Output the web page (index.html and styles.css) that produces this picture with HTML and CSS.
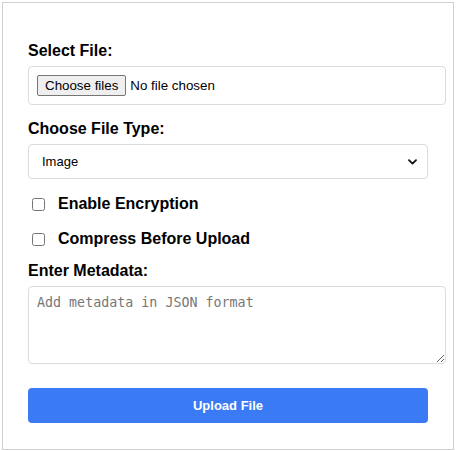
FILE: index.html
```html
<!DOCTYPE html>
<html lang="en">
<head>
<meta charset="utf-8">
<title>Upload</title>
<link rel="stylesheet" href="styles.css">
</head>
<body>
<form class="card">
  <div class="group">
    <label class="label">Select File:</label>
    <div class="file-box">
      <span class="file-btn">Choose files</span>
      <span class="file-name">No file chosen</span>
    </div>
  </div>
  <div class="group">
    <label class="label">Choose File Type:</label>
    <div class="select-wrap">
      <select class="select">
        <option>Image</option>
        <option>Document</option>
        <option>Video</option>
      </select>
      <svg class="chevron" width="9" height="6" viewBox="0 0 9 6"><path d="M1 1.2 L4.5 4.6 L8 1.2" fill="none" stroke="#111" stroke-width="1.8" stroke-linecap="round" stroke-linejoin="round"/></svg>
    </div>
  </div>
  <label class="check-row"><input type="checkbox" class="check"><span class="check-text">Enable Encryption</span></label>
  <label class="check-row"><input type="checkbox" class="check"><span class="check-text">Compress Before Upload</span></label>
  <div class="group group-meta">
    <label class="label">Enter Metadata:</label>
    <textarea class="textarea" placeholder="Add metadata in JSON format"></textarea>
  </div>
  <button type="button" class="upload">Upload File</button>
</form>
</body>
</html>
```

FILE: styles.css
```css
html, body {
  margin: 0;
  padding: 0;
  background: #fff;
}
body {
  font-family: "Liberation Sans", Arial, sans-serif;
  color: #000;
}
.card {
  box-sizing: border-box;
  width: 452px;
  height: 448px;
  margin: 2px auto 0;
  border: 1px solid #cfcfcf;
  padding: 39px 25px 25px;
  display: flex;
  flex-direction: column;
}
.group {
  display: flex;
  flex-direction: column;
  margin-bottom: 15px;
}
.label {
  font-size: 16px;
  font-weight: bold;
  line-height: 18px;
  margin-bottom: 6px;
}
.file-box {
  width: 418px;
  box-sizing: border-box;
  height: 39px;
  border: 1px solid #dcdcdc;
  border-radius: 4px;
  padding: 8px;
  display: flex;
  align-items: center;
  font-size: 13.33px;
}
.file-btn {
  box-sizing: border-box;
  height: 21px;
  display: flex;
  align-items: center;
  padding: 0 7px;
  background: #efefef;
  border: 1px solid #767676;
  border-radius: 2px;
  color: #000;
  font-size: 13.33px;
}
.file-name {
  margin-left: 4px;
  font-size: 13.33px;
}
.select-wrap {
  position: relative;
  width: 400px;
}
.select {
  -webkit-appearance: none;
  appearance: none;
  box-sizing: border-box;
  width: 400px;
  height: 35px;
  margin: 0;
  border: 1px solid #dcdcdc;
  border-radius: 4px;
  background: #fff;
  padding: 0 13px;
  font-family: "Liberation Sans", Arial, sans-serif;
  font-size: 13px;
  color: #000;
}
.chevron {
  position: absolute;
  right: 11px;
  top: 15px;
}
.check-row {
  display: flex;
  align-items: center;
  height: 20px;
  margin-bottom: 15px;
}
.check {
  width: 13px;
  height: 13px;
  margin: 0 0 0 4px;
}
.check-text {
  margin-left: 13px;
  font-size: 16px;
  font-weight: bold;
}
.group-meta {
  margin-top: -2px;
  margin-bottom: 24px;
}
.textarea {
  display: block;
  box-sizing: border-box;
  width: 418px;
  height: 78px;
  margin: 0;
  border: 1px solid #dcdcdc;
  border-radius: 4px;
  padding: 8px;
  font-family: "DejaVu Sans Mono", "Liberation Mono", monospace;
  font-size: 13.33px;
  line-height: 16px;
  resize: vertical;
}
.textarea::placeholder {
  color: #777;
}
.upload {
  width: 400px;
  height: 35px;
  border: none;
  border-radius: 4px;
  background: #3a7bf5;
  color: #fff;
  font-family: "Liberation Sans", Arial, sans-serif;
  font-size: 13px;
  font-weight: bold;
  padding: 0;
}
```
